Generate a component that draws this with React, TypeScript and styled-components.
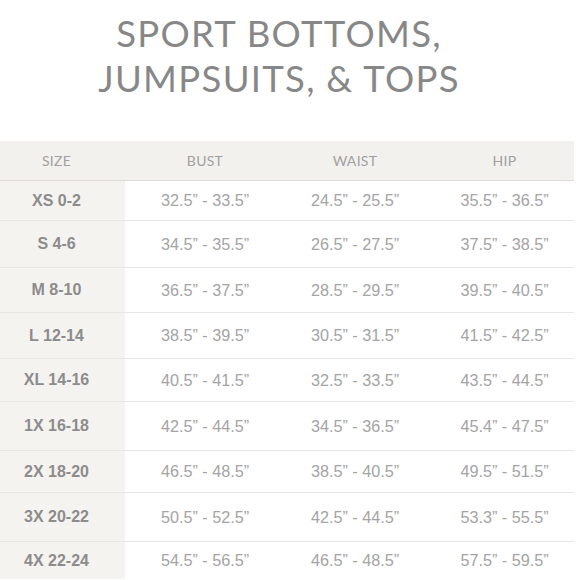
import styled, { createGlobalStyle } from 'styled-components';

const GlobalStyle = createGlobalStyle`
    body {
        margin: 0;
        background: #ffffff;
    }
`

const Page = styled.div`
    width: 580px;
    height: 580px;
    overflow: hidden;
    background: #ffffff;
`

const Title = styled.h1`
    margin: 0;
    padding: 11px 0 0 0;
    width: 558px;
    height: 141px;
    box-sizing: border-box;
    font-family: Lato, "Open Sans", sans-serif;
    font-weight: 400;
    font-size: 36.5px;
    line-height: 45px;
    color: #878787;
    text-align: center;
    letter-spacing: 1.3px;
`

const Table = styled.div`
    width: 574px;
    display: flex;
    flex-direction: column;
`

const Row = styled.div<{ $h: number; $head?: boolean }>`
    display: grid;
    grid-template-columns: 125px 160px 140px 149px;
    height: ${p => p.$h}px;
    background: ${p => (p.$head ? '#f3f1ed' : '#ffffff')};
    border-bottom: 1px solid ${p => (p.$head ? '#dedbd6' : '#e8e7e4')};
    box-sizing: border-box;

    &:last-child {
        border-bottom: none;
    }
`

const Cell = styled.div<{ $shift?: number }>`
    display: flex;
    align-items: center;
    justify-content: center;
    padding-left: ${p => p.$shift || 0}px;
    font-family: "Liberation Sans", Arial, sans-serif;
    font-size: 16.2px;
    color: #a4a4a4;
    white-space: nowrap;
`

const SizeCell = styled(Cell)<{ $head?: boolean }>`
    background: ${p => (p.$head ? 'transparent' : '#f5f3f0')};
    padding-right: 12px;
    font-size: 16px;
    font-weight: ${p => (p.$head ? 400 : 700)};
    color: ${p => (p.$head ? '#a0a0a0' : '#8c8c8c')};
`

const HeadCell = styled(Cell)`
    font-family: Lato, "Open Sans", sans-serif;
    font-size: 14px;
    color: #a0a0a0;
    letter-spacing: 0.3px;
`

const rows = [
    { size: 'XS 0-2', bust: '32.5” - 33.5”', waist: '24.5” - 25.5”', hip: '35.5” - 36.5”', h: 40 },
    { size: 'S 4-6', bust: '34.5” - 35.5”', waist: '26.5” - 27.5”', hip: '37.5” - 38.5”', h: 47 },
    { size: 'M 8-10', bust: '36.5” - 37.5”', waist: '28.5” - 29.5”', hip: '39.5” - 40.5”', h: 45 },
    { size: 'L 12-14', bust: '38.5” - 39.5”', waist: '30.5” - 31.5”', hip: '41.5” - 42.5”', h: 46 },
    { size: 'XL 14-16', bust: '40.5” - 41.5”', waist: '32.5” - 33.5”', hip: '43.5” - 44.5”', h: 43 },
    { size: '1X 16-18', bust: '42.5” - 44.5”', waist: '34.5” - 36.5”', hip: '45.4” - 47.5”', h: 49 },
    { size: '2X 18-20', bust: '46.5” - 48.5”', waist: '38.5” - 40.5”', hip: '49.5” - 51.5”', h: 42 },
    { size: '3X 20-22', bust: '50.5” - 52.5”', waist: '42.5” - 44.5”', hip: '53.3” - 55.5”', h: 49 },
    { size: '4X 22-24', bust: '54.5” - 56.5”', waist: '46.5” - 48.5”', hip: '57.5” - 59.5”', h: 37 },
]

export default function App() {
    return (
        <Page>
            <GlobalStyle />
            <Title>
                SPORT BOTTOMS,
                <br />
                JUMPSUITS, &amp; TOPS
            </Title>
            <Table>
                <Row $h={40} $head>
                    <SizeCell $head as={HeadCell}>SIZE</SizeCell>
                    <HeadCell>BUST</HeadCell>
                    <HeadCell>WAIST</HeadCell>
                    <HeadCell $shift={10}>HIP</HeadCell>
                </Row>
                {rows.map(r => (
                    <Row key={r.size} $h={r.h}>
                        <SizeCell>{r.size}</SizeCell>
                        <Cell>{r.bust}</Cell>
                        <Cell>{r.waist}</Cell>
                        <Cell $shift={10}>{r.hip}</Cell>
                    </Row>
                ))}
            </Table>
        </Page>
    )
}
